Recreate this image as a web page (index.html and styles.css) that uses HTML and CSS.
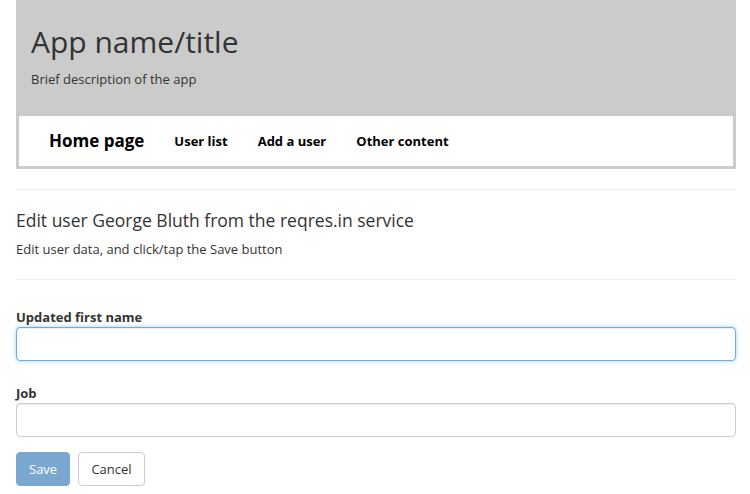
FILE: index.html
```html
<!DOCTYPE html>
<html lang="en">
<head>
<meta charset="utf-8">
<title>Edit user</title>
<link rel="stylesheet" href="styles.css">
</head>
<body>
<div class="page">
  <header class="masthead">
    <div class="brand-area">
      <h1 class="app-title">App name/title</h1>
      <p class="app-desc">Brief description of the app</p>
    </div>
    <nav class="navbar">
      <a class="nav-brand" href="#">Home page</a>
      <a class="nav-link" href="#">User list</a>
      <a class="nav-link" href="#">Add a user</a>
      <a class="nav-link" href="#">Other content</a>
    </nav>
  </header>

  <hr class="rule rule-top">
  <section class="intro">
    <h2 class="intro-title">Edit user George Bluth from the reqres.in service</h2>
    <p class="intro-text">Edit user data, and click/tap the Save button</p>
  </section>
  <hr class="rule rule-bottom">

  <form class="edit-form">
    <div class="form-group first">
      <label class="field-label" for="firstName">Updated first name</label>
      <input class="field-input focused" id="firstName" type="text">
    </div>
    <div class="form-group">
      <label class="field-label" for="job">Job</label>
      <input class="field-input" id="job" type="text">
    </div>
    <div class="actions">
      <button class="btn btn-save" type="button" disabled>Save</button>
      <button class="btn btn-cancel" type="button">Cancel</button>
    </div>
  </form>
</div>
</body>
</html>
```

FILE: styles.css
```css
* { box-sizing: border-box; }

body {
  margin: 0;
  font-family: "Open Sans", "Noto Sans", sans-serif;
  font-size: 13px;
  line-height: 1.42857;
  color: #333;
  background: #fff;
}

.page {
  width: 720px;
  margin-left: 16px;
}

.masthead {
  background: #cbcbcb;
  padding: 0 3px 3px;
}

.brand-area {
  padding: 23px 12px 28px;
}

.app-title {
  margin: 0;
  font-size: 30px;
  font-weight: 400;
  line-height: 38px;
  color: #333;
}

.app-desc {
  margin: 9px 0 0;
  font-size: 13px;
  line-height: 18px;
  color: #333;
}

.navbar {
  background: #fff;
  height: 50px;
  display: flex;
  align-items: center;
  padding: 0 15px;
}

.nav-brand {
  padding: 0 15px;
  font-size: 17px;
  font-weight: 700;
  color: #000;
  text-decoration: none;
}

.nav-link {
  padding: 0 15px;
  font-size: 13px;
  font-weight: 700;
  color: #000;
  text-decoration: none;
}

.rule {
  border: 0;
  border-top: 1px solid #eee;
  margin: 0;
}

.rule-top { margin-top: 20px; }

.intro {
  padding: 18px 0 21px;
}

.intro-title {
  margin: 0;
  font-size: 17.5px;
  font-weight: 400;
  line-height: 24px;
  color: #333;
}

.intro-text {
  margin: 8px 0 0;
  font-size: 13px;
  line-height: 18px;
}

.edit-form {
  padding-top: 27px;
}

.form-group { margin-bottom: 15px; }
.form-group.first { margin-bottom: 22px; }

.field-label {
  display: block;
  font-weight: 700;
  font-size: 13px;
  line-height: 20px;
  color: #333;
}

.field-input {
  display: block;
  width: 100%;
  height: 34px;
  padding: 6px 12px;
  font: inherit;
  border: 1px solid #ccc;
  border-radius: 4px;
  background: #fff;
  outline: none;
  box-shadow: inset 0 1px 1px rgba(0,0,0,.075);
}

.field-input.focused {
  border-color: #66afe9;
  box-shadow: inset 0 1px 1px rgba(0,0,0,.075), 0 0 4px rgba(102,175,233,.6);
}

.actions {
  display: flex;
  gap: 8px;
}

.btn {
  height: 34px;
  padding: 6px 12px;
  font: inherit;
  font-size: 13px;
  border-radius: 4px;
  border: 1px solid #ccc;
  background: #fff;
  color: #333;
}

.btn-save {
  width: 54px;
  background: #7aa7cf;
  border-color: #7aa7cf;
  color: #fff;
}

.btn-cancel {
  width: 67px;
}
```
